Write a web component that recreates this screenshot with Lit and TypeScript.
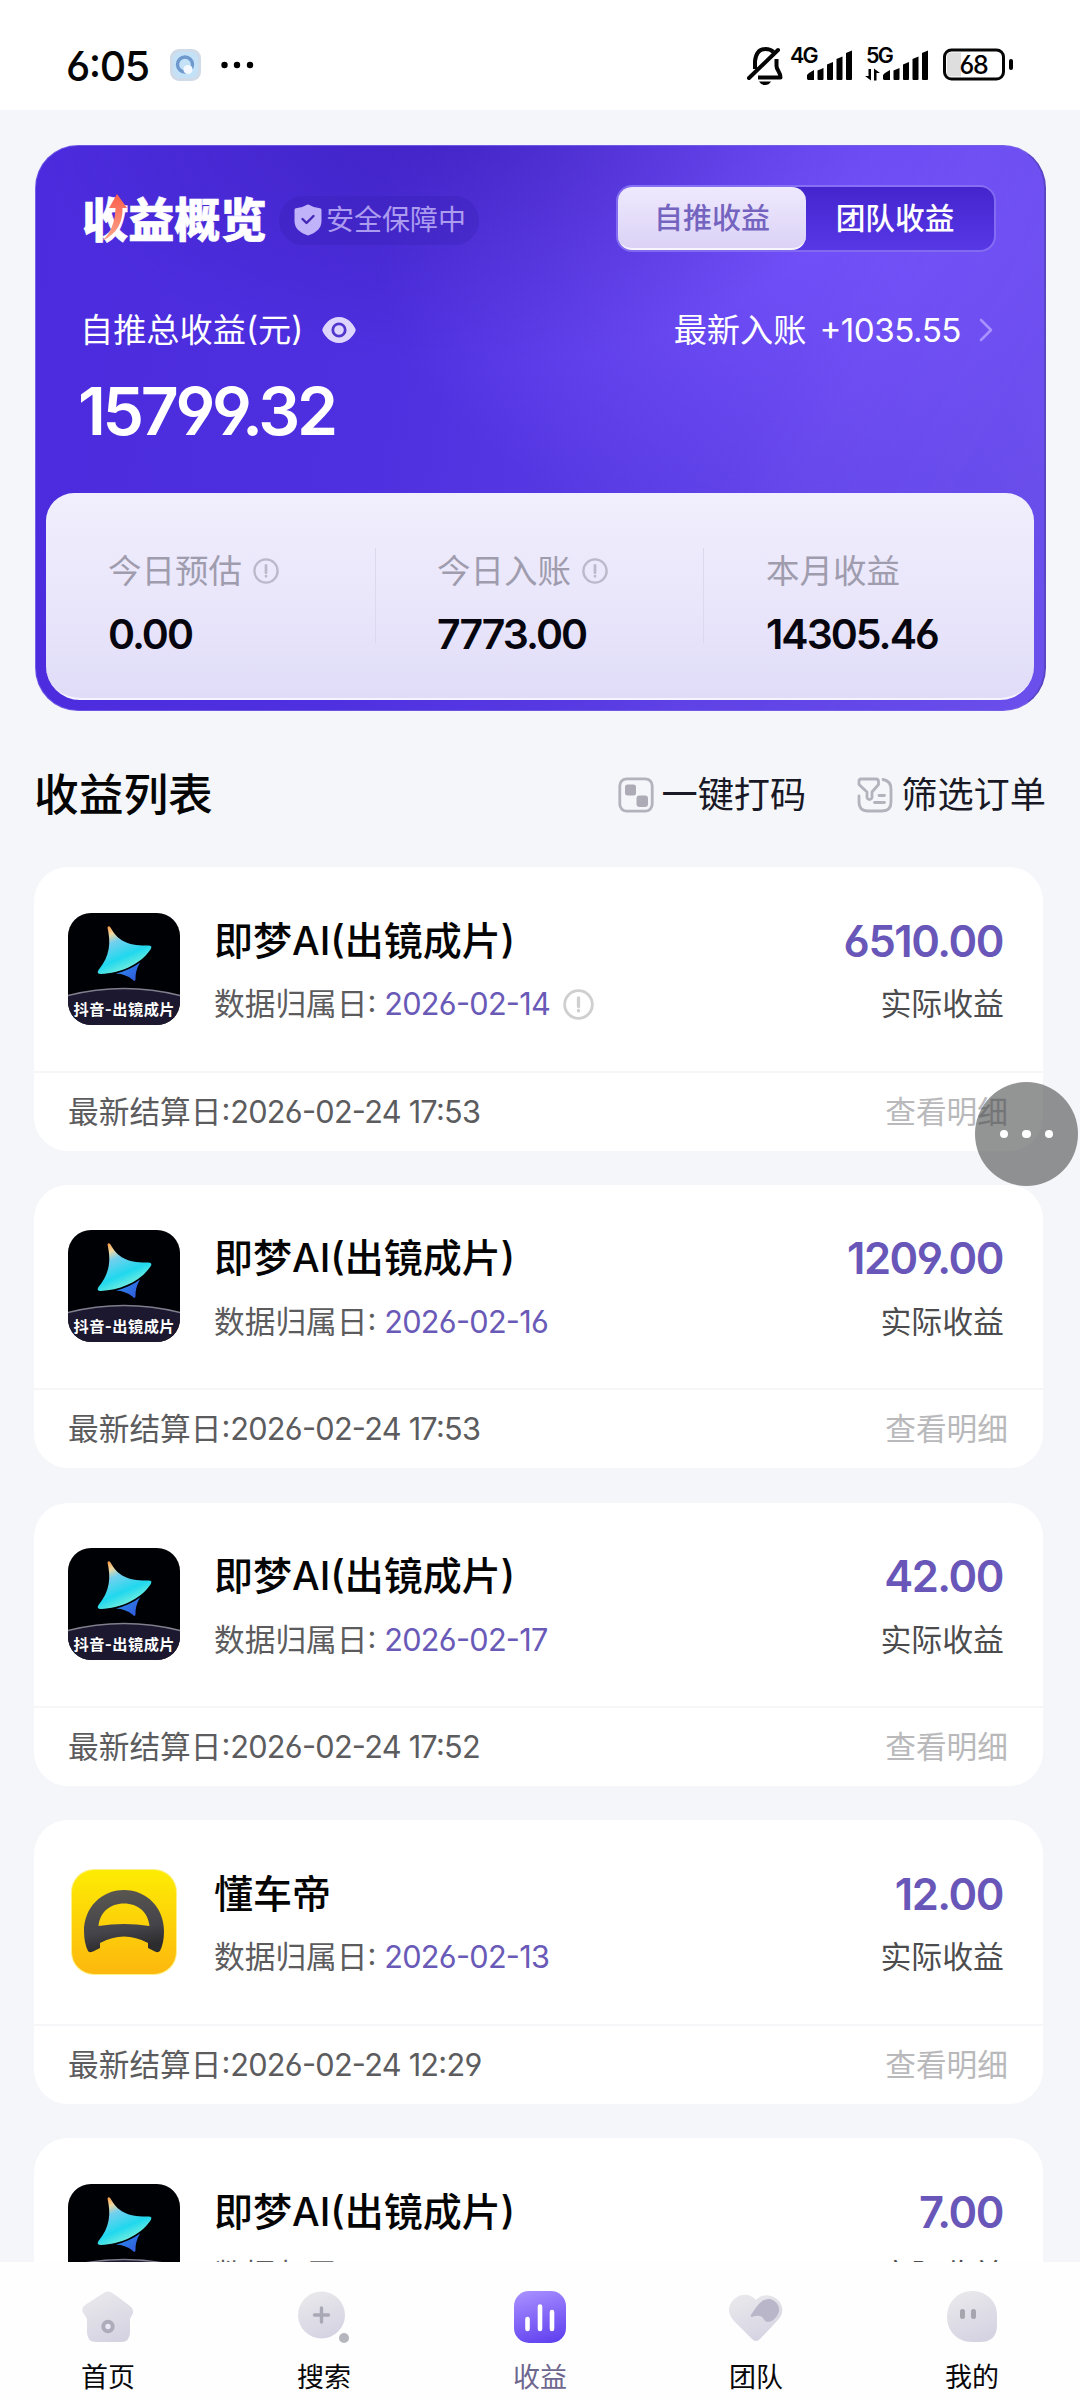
import { LitElement, html, css, svg, nothing } from "lit";
import { customElement, property } from "lit/decorators.js";

interface Income {
  app: "dream" | "car";
  name: string;
  day: string;
  amount: string;
  settled?: string;
  info?: boolean;
}

const INCOMES: Income[] = [
  { app: "dream", name: "即梦AI(出镜成片)", day: "2026-02-14", amount: "6510.00", settled: "2026-02-24 17:53", info: true },
  { app: "dream", name: "即梦AI(出镜成片)", day: "2026-02-16", amount: "1209.00", settled: "2026-02-24 17:53" },
  { app: "dream", name: "即梦AI(出镜成片)", day: "2026-02-17", amount: "42.00", settled: "2026-02-24 17:52" },
  { app: "car", name: "懂车帝", day: "2026-02-13", amount: "12.00", settled: "2026-02-24 12:29" },
  { app: "dream", name: "即梦AI(出镜成片)", day: "", amount: "7.00" },
];

const base = css`
  * { box-sizing: border-box; }
  svg { display: block; flex: none; overflow: visible; }
`;

const infoIcon = (size: number) => html`
  <svg width=${size} height=${size} viewBox="0 0 30 30" fill="none" stroke="currentColor" stroke-width="2.7">
    <circle cx="15" cy="15" r="13.4" />
    <path d="M15 8.500v8.500M15 20.800v.4" stroke-width="3.200" stroke-linecap="round" />
  </svg>`;

@customElement("status-bar")
export class StatusBar extends LitElement {
  static styles = [base, css`
    :host { display: flex; height: 110px; padding: 20px 66px 0 66px; align-items: center; justify-content: space-between; background: #fff; color: #050505; }
    .left, .right { display: flex; align-items: center; }
    .time { font-size: 41px; font-weight: 500; line-height: 50px; letter-spacing: -1.5px; width: 104px; padding-top: 1px; }
    .dots { margin-left: 20px; }
    .g { font: 600 21.500px/20px Inter, sans-serif; letter-spacing: -1.8px; }
    .b { font: 500 25px/25px Inter, sans-serif; letter-spacing: -1.3px; font-feature-settings: "cv03"; }
  `];

  private bars(x: number) {
    return svg`
      <path d="M${x} 32v-4l2-2 5-3v10h-6z" />
      ${[[10.5, 12], [20, 18], [29.5, 23.5], [39, 29.5]].map(([dx, h]) => svg`
        <path d="M${x + dx} ${33 - h + 2.5}l6-2.5v${h - 1}q0 1-1 1h-4q-1 0-1-1z" />`)}`;
  }

  render() {
    return html`
      <div class="left">
        <span class="time">6:05</span>
        <svg width="31" height="32" viewBox="0 0 31 32">
          <rect width="31" height="32" rx="9" fill="#cfdbe8" />
          <rect x="3" y="3" width="25" height="26" rx="8" fill="#c3e2f8" />
          <circle cx="15" cy="15.500" r="7.500" fill="none" stroke="#6f98cd" stroke-width="3.400" />
          <circle cx="18" cy="20.500" r="4.600" fill="#f4f9ff" />
        </svg>
        <svg class="dots" width="33" height="8" viewBox="0 0 33 8">
          <circle cx="3.500" cy="4" r="3.200" /><circle cx="16" cy="4" r="3.200" /><circle cx="29" cy="4" r="3.200" />
        </svg>
      </div>
      <div class="right">
        <svg width="267" height="42" viewBox="0 -3 267 42">
          <g fill="none" stroke="#050505" stroke-width="4" stroke-linejoin="round">
            <path d="M8 22V14C9 6 13 2 18.500 2c4 0 6 1 8 3" />
            <path d="M29.500 12v7c0 4 4 6 4 11.500H11" />
            <path d="M2 31 31 3" stroke-linecap="round" />
          </g>
          <path d="M12 34.500h12q-2 3.500-6 3.500t-6-3.500z" />
          <text class="g" x="43" y="15.500">4G</text>
          ${this.bars(60)}
          <text class="g" x="119" y="15.500">5G</text>
          <path d="M121.500 22v7h-3.500l6 4.500V22zM127 33.500V21.500l6 4.500h-3.500v7.500z" />
          ${this.bars(136)}
          <rect x="197.500" y="3" width="59" height="29" rx="7" fill="#fff" stroke="#050505" stroke-width="3" />
          <path d="M204 5.500h10v24h-10q-4 0-4-4v-16q0-4 4-4z" fill="#dedede" />
          <text class="b" x="212.500" y="26.500">68</text>
          <rect x="262" y="12" width="4" height="11" rx="2" />
        </svg>
      </div>`;
  }
}

@customElement("overview-card")
export class OverviewCard extends LitElement {
  static styles = [base, css`
    :host {
      display: block; height: 566px; margin: 35px 34px 0 35px; padding: 39px 10px 0; border-radius: 43px; color: #fff;
      border: 1px solid rgba(120, 100, 230, 0.75); border-right: 2px solid #5a45c4;
      background:
        linear-gradient(118deg, transparent 66%, rgba(150, 120, 255, 0.06) 72%, rgba(150, 120, 255, 0.02) 84%, transparent 84.200%),
        radial-gradient(420px 240px at 42% -4%, rgba(50, 22, 170, 0.5), transparent),
        radial-gradient(430px 330px at 76% 14%, rgba(120, 84, 255, 0.8), transparent),
        linear-gradient(100deg, #4b2bdd 0%, #4f30e0 35%, #5d40e5 70%, #6c50ec 100%);
    }
    .top { display: flex; height: 67px; padding: 0 38px 0 35px; align-items: center; }
    .title { position: relative; width: 190px; padding: 3px 0 0 1px; font-size: 46.200px; line-height: 64px; font-weight: 900; white-space: nowrap; -webkit-text-stroke: 0.6px #fff; }
    .arrow { position: absolute; left: 21px; top: 9px; }
    .badge { display: flex; height: 49px; width: 200px; margin: 3px 0 0 8px; padding-left: 15px; gap: 4px; align-items: center; border-radius: 25px; background: rgba(50, 28, 170, 0.27); font-size: 28px; line-height: 48px; color: #ac9cf0; white-space: nowrap; }
    .tabs { display: flex; width: 380px; height: 67px; margin-left: auto; border: 2px solid rgba(150, 130, 250, 0.75); border-radius: 16px; background: linear-gradient(#4425cd, #5837e6); font-size: 29.700px; line-height: 63px; font-weight: 500; text-align: center; }
    .tab { flex: 1; padding-right: 10px; }
    .on { flex: none; width: 188px; padding-right: 0; font-size: 29px; border-radius: 14px; color: #7564bf; background: linear-gradient(#efe9fd, #dbd2f6); border-bottom: 2px solid #f8f5ff; }
    .sum { display: flex; height: 48px; margin-top: 54px; padding: 0 41px 0 34px; align-items: center; font-size: 33.200px; line-height: 48px; }
    .eye { margin-left: 19px; }
    .latest { display: flex; margin-left: auto; align-items: center; }
    .plus { margin-left: 13px; letter-spacing: -0.5px; }
    .chev { margin-left: 18px; }
    .total { height: 70px; margin-top: 22px; padding-left: 32px; font-size: 66px; line-height: 71px; font-weight: 600; letter-spacing: -3.300px; }
    .panel { display: grid; grid-template-columns: 329px 328px 1fr; height: 207px; margin-top: 47px; border-radius: 28px 28px 34px 34px; background: linear-gradient(#f1eefd, #e9e6fb 55%, #e0dcf8); border-bottom: 2px solid #f6f4ff; }
    .cell { position: relative; padding: 58px 0 0 62px; }
    .cell:last-child { padding-left: 63px; }
    .cell + .cell::before { content: ""; position: absolute; left: 0; top: 55px; width: 1px; height: 95px; background: #dcd9ef; }
    .label { display: flex; height: 40px; align-items: center; gap: 11px; font-size: 33.500px; line-height: 40px; color: #9f9cae; }
    .label svg { color: #bcb9ca; }
    .value { margin-top: 19px; font-size: 41px; line-height: 48px; font-weight: 600; color: #07060f; letter-spacing: -2px; }
  `];

  render() {
    return html`
      <div class="top">
        <div class="title">收益概览
          <svg class="arrow" width="28" height="50" viewBox="0 0 28 50">
            <defs><linearGradient id="a" x1="0" y1="0" x2="0" y2="1"><stop offset="0" stop-color="#fb5f4c" /><stop offset="1" stop-color="#fba58c" /></linearGradient></defs>
            <path d="M15 0 25 14H20.500C21 28 15 40 0 47 9 39 13 28 13.500 14H7z" fill="url(#a)" />
          </svg>
        </div>
        <div class="badge">
          <svg width="28" height="32" viewBox="0 0 28 32">
            <path d="M14 0.500q1 0 2 .8 4 2.700 10 3 1.500.2 1.500 1.700V17q0 10-13.500 14.500Q.5 27 .5 17V6q0-1.500 1.500-1.700 6-.3 10-3 1-.8 2-.8z" fill="#c0b3fa" />
            <path d="M8.500 15l4 4 7-7" fill="none" stroke="#4326b4" stroke-width="2.400" stroke-linecap="round" stroke-linejoin="round" />
          </svg>
          <span>安全保障中</span>
        </div>
        <div class="tabs"><div class="tab on">自推收益</div><div class="tab">团队收益</div></div>
      </div>
      <div class="sum">
        <span>自推总收益(元)</span>
        <svg class="eye" width="34" height="26" viewBox="0 0 34 26">
          <path d="M17 0C26 0 31 7 33.300 11.500q.8 1.500 0 3C31 19 26 26 17 26S3 19 .7 14.500q-.8-1.500 0-3C3 7 8 0 17 0z" fill="#ded6ff" />
          <circle cx="17" cy="13" r="6.200" fill="#ded6ff" stroke="#5137cb" stroke-width="2.800" />
        </svg>
        <div class="latest">
          <span>最新入账</span><span class="plus">+1035.55</span>
          <svg class="chev" width="14" height="24" viewBox="0 0 14 24" fill="none" stroke="#a792ff" stroke-width="2.600" stroke-linecap="round" stroke-linejoin="round"><path d="M2 2l10 10L2 22" /></svg>
        </div>
      </div>
      <div class="total">15799.32</div>
      <div class="panel">
        <div class="cell"><div class="label">今日预估${infoIcon(26)}</div><div class="value">0.00</div></div>
        <div class="cell"><div class="label">今日入账${infoIcon(26)}</div><div class="value">7773.00</div></div>
        <div class="cell"><div class="label">本月收益</div><div class="value">14305.46</div></div>
      </div>`;
  }
}

@customElement("app-icon")
export class AppIcon extends LitElement {
  @property() kind = "dream";

  static styles = [base, css`
    :host { display: block; width: 112px; height: 112px; flex: none; }
    .cap { font: 700 15.200px Inter, "Noto Sans CJK SC", sans-serif; }
  `];

  render() {
    if (this.kind === "car") {
      return html`
        <svg width="112" height="112" viewBox="0 0 112 112">
          <defs>
            <linearGradient id="y" x1="0" y1="0" x2="0" y2="1"><stop offset="0" stop-color="#fdec03" /><stop offset="1" stop-color="#fdb80e" /></linearGradient>
            <linearGradient id="k" x1="0" y1="0" x2="0.200" y2="1"><stop offset="0" stop-color="#5c5951" /><stop offset="0.700" stop-color="#45444a" /><stop offset="1" stop-color="#2c2b2d" /></linearGradient>
          </defs>
          <rect x="3" y="3" width="106" height="106" rx="23" fill="#fdf08a" />
          <rect x="4" y="4" width="104" height="104" rx="22" fill="url(#y)" />
          <path fill-rule="evenodd" fill="url(#k)" d="M56 24C79 24 96 42 96 65Q96 77 92 85Q90 87 87 85.500L80 82V77Q56 64 32 77V82L25 85.500Q21 87 20 85Q16 77 16 65C16 42 33 24 56 24zM56 37.500C42 37.500 32 46 30.500 60Q56 56 81.500 60C80 46 70 37.500 56 37.500z" />
        </svg>`;
    }
    return html`
      <svg width="112" height="112" viewBox="0 0 112 112">
        <defs>
          <clipPath id="c"><rect width="112" height="112" rx="23" /></clipPath>
          <linearGradient id="s" x1="40" y1="13" x2="60" y2="58" gradientUnits="userSpaceOnUse"><stop offset="0" stop-color="#f5923c" /><stop offset="0.170" stop-color="#f2d9a0" /><stop offset="0.350" stop-color="#72d0ee" /><stop offset="0.700" stop-color="#20d8ee" /><stop offset="1" stop-color="#7df0dc" /></linearGradient>
          <linearGradient id="b" x1="50" y1="52" x2="68" y2="70" gradientUnits="userSpaceOnUse"><stop offset="0" stop-color="#2c8df0" /><stop offset="1" stop-color="#3156d8" /></linearGradient>
        </defs>
        <g clip-path="url(#c)">
          <rect width="112" height="112" fill="#000105" />
          <path d="M39.500 14.500Q40.500 12 42.500 14.500C50 28 60 33 80.500 32.500Q85 32.500 82.500 36.500C72 52 52 60 33 61Q28 61 30.500 57C42 43 43 30 39.500 14.500z" fill="url(#s)" />
          <path d="M48 60.500Q62 57 72 49.500Q67 58 67.500 66.500Q67 69 65 67Q58 61 48 60.500z" fill="url(#b)" />
          <path d="M-2 83Q56 68 114 83V114H-2z" fill="#1b1830" stroke="#7f7e8c" stroke-width="1.500" />
          <text class="cap" x="56" y="101.500" text-anchor="middle" fill="#fff" textLength="101">抖音-出镜成片</text>
        </g>
      </svg>`;
  }
}

@customElement("income-card")
export class IncomeCard extends LitElement {
  @property({ attribute: false }) item!: Income;

  static styles = [base, css`
    :host { display: block; height: 283.500px; flex: none; background: #fff; border-radius: 34px; }
    .main { display: flex; height: 205.500px; padding: 45.500px 40px 0 34px; border-bottom: 2px solid #f6f6f8; }
    .text { margin-left: 34px; flex: 1; padding-top: 1px; }
    .name { font-size: 39px; line-height: 54px; font-weight: 500; color: #050505; white-space: nowrap; }
    .day { display: flex; height: 44px; margin-top: 14.500px; align-items: center; font-size: 30.700px; line-height: 44px; color: #5c5c5e; }
    .date { margin-left: 8px; color: #6a5ab8; letter-spacing: -0.750px; }
    .day svg { margin-left: 13px; color: #cfcfd0; }
    .right { text-align: right; font-size: 30.900px; line-height: 44px; color: #4c4c4e; }
    .amount { font-size: 43.500px; line-height: 57px; font-weight: 600; color: #6857b9; letter-spacing: -1.450px; }
    .real { margin: 12.500px -1px 0 0; }
    .foot { display: flex; height: 78px; padding: 0 35px 0 34px; justify-content: space-between; font-size: 30.700px; line-height: 78px; color: #5c5c5e; }
    .more { color: #b9b9bc; }
    .when { letter-spacing: -0.750px; }
  `];

  render() {
    const i = this.item;
    return html`
      <div class="main">
        <app-icon kind=${i.app}></app-icon>
        <div class="text">
          <div class="name">${i.name}</div>
          <div class="day"><span>数据归属日:</span><span class="date">${i.day}</span>${i.info ? infoIcon(31) : nothing}</div>
        </div>
        <div class="right"><div class="amount">${i.amount}</div><div class="real">实际收益</div></div>
      </div>
      ${i.settled ? html`
        <div class="foot"><span>最新结算日:<span class="when">${i.settled}</span></span><span class="more">查看明细</span></div>` : nothing}`;
  }
}

@customElement("tab-bar")
export class TabBar extends LitElement {
  static styles = [base, css`
    :host { display: grid; grid-template-columns: repeat(5, 1fr); height: 138px; padding-top: 27px; flex: none; background: #fefefe; }
    .item { display: flex; flex-direction: column; align-items: center; font-size: 27px; line-height: 40px; color: #08080a; gap: 13px; }
    .on { color: #6d668f; }
  `];

  private items = [
    { label: "首页", on: false, art: svg`
      <path d="M22 5q6-5 12 0L50 17q5 4 2 9l-2 4V43q0 10-9 10H16q-9 0-9-10V30L4 25q-4-5 1-9z" fill="url(#g)" />
      <circle cx="28" cy="37.500" r="4.700" fill="#e9e7f4" stroke="#aeacbb" stroke-width="4" />` },
    { label: "搜索", on: false, art: svg`
      <circle cx="25.500" cy="26" r="23.500" fill="url(#g)" />
      <path d="M25.500 19v14M18.500 26h14" stroke="#a9a8b5" stroke-width="3.400" stroke-linecap="round" />
      <circle cx="48" cy="49" r="5" fill="#b5b5bd" />` },
    { label: "收益", on: true, art: svg`
      <rect x="2" y="2" width="52" height="52" rx="15" fill="url(#p)" />
      <path d="M15.500 30v10M28 17.500v22.500M40 23v17" stroke="#fff" stroke-width="4.600" stroke-linecap="round" />` },
    { label: "团队", on: false, art: svg`
      <path d="M28 11C34 4 45 5 51 12C57 20 54 27 49 32L32 50Q28 54 24 50L6 32C0 25-1 18 5 11C12 4 22 4 28 11z" fill="url(#g)" />
      <path d="M23 26C29 17 34 9 42 10C50 12 53 20 50 25C48 29 44 33 40 33Q37 33 35 29Q32 25 24 28Q22 28 23 26z" fill="#b9b6c9" />` },
    { label: "我的", on: false, art: svg`
      <path d="M28 2C42 2 53 12 53 26V36Q53 53 36 53H28C13 53 3 42 3 28C3 13 14 2 28 2z" fill="url(#g)" />
      <path d="M18.500 22.500v5M29.500 22.500v5" stroke="#a5a4af" stroke-width="5" stroke-linecap="round" />` },
  ];

  render() {
    return this.items.map((t) => html`
      <div class="item ${t.on ? "on" : ""}">
        <svg width="56" height="56" viewBox="0 0 56 56">
          <defs>
            <linearGradient id="g" x1="0.200" y1="0" x2="0.600" y2="1"><stop offset="0" stop-color="#e9e9ec" /><stop offset="1" stop-color="#d5d3e2" /></linearGradient>
            <linearGradient id="p" x1="0.300" y1="0" x2="0.600" y2="1"><stop offset="0" stop-color="#a68dff" /><stop offset="1" stop-color="#6343f0" /></linearGradient>
          </defs>
          ${t.art}
        </svg>
        <span>${t.label}</span>
      </div>`);
  }
}

@customElement("app-root")
export class AppRoot extends LitElement {
  static styles = [base, css`
    :host { display: flex; flex-direction: column; position: relative; width: 1080px; height: 2400px; overflow: hidden; background: #f5f6fa; font-family: Inter, "Noto Sans CJK SC", sans-serif; font-feature-settings: "cv03", "cv04", "case"; }
    .head { display: flex; height: 156px; padding: 12px 34px 0 34px; align-items: center; color: #191926; flex: none; }
    .h { flex: 1; font-size: 44.700px; line-height: 60px; font-weight: 500; color: #050505; }
    .act { display: flex; align-items: center; gap: 8px; font-size: 36.200px; line-height: 50px; }
    .act + .act { margin-left: 51px; }
    .list { display: flex; flex-direction: column; gap: 34.300px; flex: 1; min-height: 0; overflow: hidden; padding: 0 37px 0 34px; }
    .float { position: absolute; left: 975px; top: 1082px; width: 103px; height: 104px; border-radius: 50%; background: rgba(62, 65, 64, 0.56); display: flex; align-items: center; justify-content: center; gap: 14px; }
    .float i { width: 8.500px; height: 8.500px; border-radius: 50%; background: #fff; }
  `];

  render() {
    return html`
      <status-bar></status-bar>
      <overview-card></overview-card>
      <div class="head">
        <div class="h">收益列表</div>
        <div class="act">
          <svg width="36" height="36" viewBox="0 0 36 36">
            <rect x="1.800" y="1.800" width="32.400" height="32.400" rx="7" fill="none" stroke="#b3b2bd" stroke-width="2.800" />
            <rect x="7" y="7.500" width="11" height="11" rx="2.500" fill="#adacb6" /><rect x="18.500" y="18.500" width="11.500" height="11.500" rx="3" fill="#adacb6" />
          </svg>一键打码
        </div>
        <div class="act">
          <svg width="36" height="36" viewBox="0 0 36 36" fill="none" stroke="#b3b2bd" stroke-width="2.800" stroke-linecap="round" stroke-linejoin="round">
            <path d="M4 2H19Q21.500 2 21.500 4.500V7.500L15 15V20.500Q14.500 22.500 12.500 22.500T10 20.500V15L2 7.500V4Q2 2 4 2zM26 2.500Q34 4 34 12V25Q34 34 25 34H11Q2 34 2 25V19M22 18.500h5.500M17.500 25.500h10" />
          </svg>筛选订单
        </div>
      </div>
      <div class="list">${INCOMES.map((i) => html`<income-card .item=${i}></income-card>`)}</div>
      <tab-bar></tab-bar>
      <div class="float"><i></i><i></i><i></i></div>`;
  }
}
